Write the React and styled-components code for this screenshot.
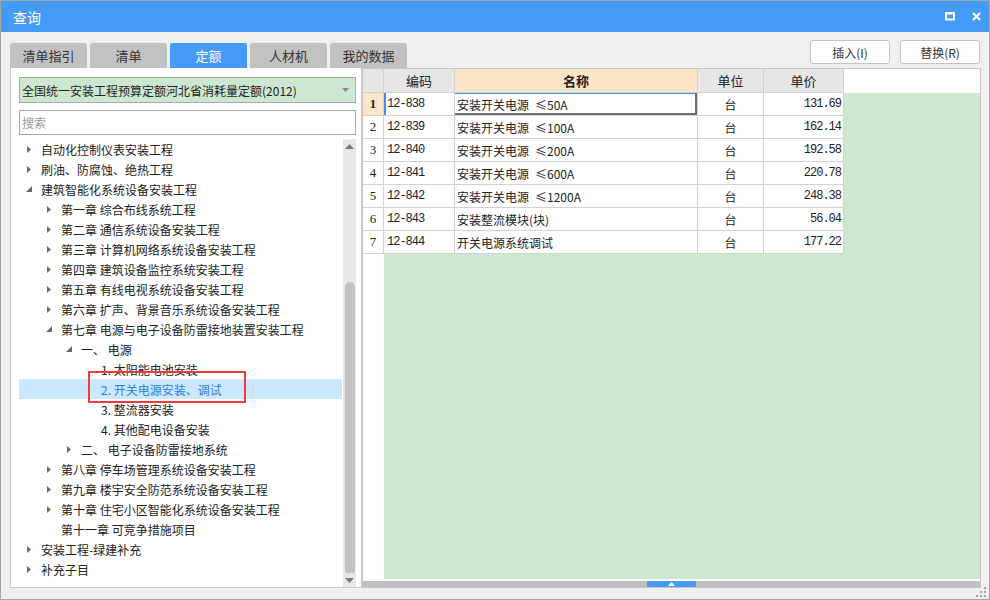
import styled, { createGlobalStyle } from "styled-components";

/**
 * Data
 */
const tabs = ["清单指引", "清单", "定额", "人材机", "我的数据"];

const tree = [
  { level: 0, arrow: "closed", text: "自动化控制仪表安装工程" },
  { level: 0, arrow: "closed", text: "刷油、防腐蚀、绝热工程" },
  { level: 0, arrow: "open", text: "建筑智能化系统设备安装工程" },
  { level: 1, arrow: "closed", text: "第一章 综合布线系统工程" },
  { level: 1, arrow: "closed", text: "第二章 通信系统设备安装工程" },
  { level: 1, arrow: "closed", text: "第三章 计算机网络系统设备安装工程" },
  { level: 1, arrow: "closed", text: "第四章 建筑设备监控系统安装工程" },
  { level: 1, arrow: "closed", text: "第五章 有线电视系统设备安装工程" },
  { level: 1, arrow: "closed", text: "第六章 扩声、背景音乐系统设备安装工程" },
  { level: 1, arrow: "open", text: "第七章 电源与电子设备防雷接地装置安装工程" },
  { level: 2, arrow: "open", text: "一、 电源" },
  { level: 3, text: "1. 太阳能电池安装" },
  { level: 3, text: "2. 开关电源安装、调试", selected: true },
  { level: 3, text: "3. 整流器安装" },
  { level: 3, text: "4. 其他配电设备安装" },
  { level: 2, arrow: "closed", text: "二、 电子设备防雷接地系统" },
  { level: 1, arrow: "closed", text: "第八章 停车场管理系统设备安装工程" },
  { level: 1, arrow: "closed", text: "第九章 楼宇安全防范系统设备安装工程" },
  { level: 1, arrow: "closed", text: "第十章 住宅小区智能化系统设备安装工程" },
  { level: 1, text: "第十一章 可竞争措施项目" },
  { level: 0, arrow: "closed", text: "安装工程-绿建补充" },
  { level: 0, arrow: "closed", text: "补充子目" },
];

const rows = [
  ["12-838", "安装开关电源\u2002≤50A", "台", "131.69"],
  ["12-839", "安装开关电源\u2002≤100A", "台", "162.14"],
  ["12-840", "安装开关电源\u2002≤200A", "台", "192.58"],
  ["12-841", "安装开关电源\u2002≤600A", "台", "220.78"],
  ["12-842", "安装开关电源\u2002≤1200A", "台", "248.38"],
  ["12-843", "安装整流模块(块)", "台", "56.04"],
  ["12-844", "开关电源系统调试", "台", "177.22"],
];

const cols = { num: 21, code: 71, name: 243, unit: 66, price: 80 };

/**
 * Styles
 */
const GlobalStyle = createGlobalStyle`
  html, body { margin: 0; padding: 0; }
  body {
    font-family: "Noto Sans CJK SC", "Noto Sans", sans-serif;
    font-size: 12px;
    color: #222;
  }
`;

const Window = styled.div`
  position: relative;
  width: 990px;
  height: 600px;
  box-sizing: border-box;
  border: 1px solid #a6a6a6;
  background: #f0f0f0;
  display: flex;
  flex-direction: column;
`;

const TitleBar = styled.div`
  height: 31px;
  flex-shrink: 0;
  background: #459bf8;
  color: #fff;
  font-size: 14px;
  display: flex;
  align-items: center;
  padding: 0 8px 0 12px;
`;

const WindowButtons = styled.div`
  margin-left: auto;
  display: flex;
  align-items: center;
  gap: 17px;
`;

const TopRow = styled.div`
  height: 36px;
  flex-shrink: 0;
  display: flex;
  padding: 0 8px 0 9px;
`;

const Tabs = styled.div`
  display: flex;
  gap: 3px;
  align-self: flex-end;
`;

const Tab = styled.div`
  width: 77px;
  height: 25px;
  display: flex;
  align-items: center;
  justify-content: center;
  font-size: 13px;
  border-radius: 2px 2px 0 0;
  background: ${({ $active }) => ($active ? "#459bf8" : "#c2c2c2")};
  color: ${({ $active }) => ($active ? "#fff" : "#333")};
`;

const Actions = styled.div`
  margin-left: auto;
  display: flex;
  gap: 10px;
  padding-top: 8px;
  padding-right: 1px;
`;

const ActionButton = styled.button`
  width: 80px;
  height: 24px;
  padding: 0;
  border: 1px solid #c4c4c4;
  border-radius: 3px;
  background: #fff;
  color: #333;
  font-family: "Noto Sans CJK SC", "Noto Sans", sans-serif;
  font-size: 12px;
`;

const Main = styled.div`
  height: 520px;
  flex-shrink: 0;
  display: flex;
  padding: 0 8px 0 9px;
`;

const LeftPanel = styled.div`
  width: 352px;
  box-sizing: border-box;
  border: 1px solid #c9c9c9;
  border-top: none;
  background: #fff;
  display: flex;
  flex-direction: column;
  padding: 9px 5px 0 8px;
`;

const Dropdown = styled.div`
  height: 26px;
  box-sizing: border-box;
  border: 1px solid #a9a9a9;
  background: #cde8d1;
  display: flex;
  align-items: center;
  padding: 0 6px 0 2px;
  font-size: 12px;
  color: #222;
  svg {
    margin-left: auto;
  }
`;

const Search = styled.input`
  margin-top: 7px;
  height: 25px;
  box-sizing: border-box;
  border: 1px solid #a9a9a9;
  padding: 0 2px;
  outline: none;
  font-family: "Noto Sans CJK SC", "Noto Sans", sans-serif;
  font-size: 12px;
  &::placeholder {
    color: #9a9a9a;
  }
`;

const TreeArea = styled.div`
  margin-top: 4px;
  flex: 1;
  min-height: 0;
  display: flex;
`;

const TreeList = styled.div`
  width: 323px;
  overflow: hidden;
`;

const TreeRow = styled.div`
  position: relative;
  height: 20px;
  line-height: 19px;
  display: flex;
  align-items: center;
  white-space: nowrap;
  padding-left: ${({ $level }) => $level * 20 + 2}px;
  background: ${({ $selected }) => ($selected ? "#cce8ff" : "transparent")};
  color: ${({ $selected }) => ($selected ? "#2f7de0" : "#222")};
`;

const ArrowBox = styled.span`
  width: 14px;
  margin: 0 5px 0 1px;
  display: flex;
  align-items: center;
  justify-content: center;
`;

const RedBox = styled.div`
  position: absolute;
  left: 69px;
  top: -8px;
  width: 158px;
  height: 32px;
  box-sizing: border-box;
  border: 2px solid #ee3b3b;
  pointer-events: none;
`;

const VScroll = styled.div`
  width: 13px;
  margin-left: 1px;
  background: #e8e8e8;
  display: flex;
  flex-direction: column;
  align-items: center;
`;

const ScrollArrow = styled.div`
  height: 14px;
  display: flex;
  align-items: center;
  justify-content: center;
`;

const ScrollTrack = styled.div`
  flex: 1;
  padding-top: 129px;
`;

const Thumb = styled.div`
  width: 10px;
  height: 291px;
  border-radius: 5px 5px 2px 2px;
  background: #c2c2c2;
`;

const TablePanel = styled.div`
  flex: 1;
  box-sizing: border-box;
  border: 1px solid #c6c6c6;
  background: #fff;
  display: flex;
  flex-direction: column;
`;

const HeaderRow = styled.div`
  height: 24px;
  flex-shrink: 0;
  display: flex;
`;

const HeadCell = styled.div`
  width: ${({ $w }) => $w}px;
  box-sizing: border-box;
  border-right: 1px solid #d2d2d2;
  border-bottom: 1px solid #d2d2d2;
  background: ${({ $hl }) => ($hl ? "#fde5c8" : "#e6e6e6")};
  font-weight: ${({ $hl }) => ($hl ? "bold" : "normal")};
  font-size: 13px;
  display: flex;
  align-items: center;
  justify-content: center;
`;

const BodyArea = styled.div`
  flex: 1;
  min-height: 0;
  display: flex;
  flex-direction: column;
  align-items: flex-start;
  background: linear-gradient(to right, #fff 21px, #cde8d1 21px);
`;

const DataRow = styled.div`
  height: 23px;
  display: flex;
  flex-shrink: 0;
`;

const Cell = styled.div`
  width: ${({ $w }) => $w}px;
  box-sizing: border-box;
  border-right: 1px solid #d2d2d2;
  border-bottom: 1px solid #d2d2d2;
  background: #fff;
  display: flex;
  align-items: center;
  justify-content: ${({ $align }) => $align || "flex-start"};
  padding: 0 2px 0 ${({ $pl }) => $pl ?? 2}px;
  font-family: ${({ $mono }) =>
    $mono ? '"Liberation Mono", "Noto Sans CJK SC", monospace' : '"Noto Sans CJK SC", "Noto Sans", sans-serif'};
  font-size: 12px;
  letter-spacing: ${({ $mono }) => ($mono ? "-1px" : "0")};
  white-space: pre;
  box-shadow: ${({ $shadow }) => $shadow || "none"};
`;

const NumCell = styled(Cell)`
  justify-content: center;
  padding: 0;
  font-family: "Liberation Serif", serif;
  font-size: 13px;
  font-weight: ${({ $active }) => ($active ? "bold" : "normal")};
  background: ${({ $active }) => ($active ? "#fde5c8" : "#fff")};
`;

const Gap = styled.div`
  height: 2px;
  flex-shrink: 0;
`;

const HScroll = styled.div`
  height: 6px;
  flex-shrink: 0;
  background: #c0c0c0;
  display: flex;
  justify-content: center;
`;

const HThumb = styled.div`
  width: 49px;
  background: #459bf8;
  display: flex;
  align-items: center;
  justify-content: center;
`;

const Grip = styled.svg`
  position: absolute;
  right: 3px;
  bottom: 2px;
`;

/**
 * Parts
 */
const Arrow = ({ kind }) => {
  if (kind === "closed")
    return (
      <svg width="4" height="7">
        <polygon points="0,0 4,3.5 0,7" fill="#6b6b6b" />
      </svg>
    );
  if (kind === "open")
    return (
      <svg width="6" height="6">
        <polygon points="6,0 6,6 0,6" fill="#6b6b6b" />
      </svg>
    );
  return null;
};

const App = () => {
  return (
    <>
      <GlobalStyle />
      <Window>
        <TitleBar>
          查询
          <WindowButtons>
            <svg width="10" height="9">
              <rect x="1" y="1.5" width="8" height="6" fill="none" stroke="#fff" strokeWidth="2" />
              <rect x="0" y="0" width="10" height="2" fill="#fff" />
            </svg>
            <svg width="9" height="9">
              <path d="M1 1 L8 8 M8 1 L1 8" stroke="#fff" strokeWidth="2" />
            </svg>
          </WindowButtons>
        </TitleBar>

        <TopRow>
          <Tabs>
            {tabs.map((t, i) => (
              <Tab key={t} $active={i === 2}>
                {t}
              </Tab>
            ))}
          </Tabs>
          <Actions>
            <ActionButton>插入(I)</ActionButton>
            <ActionButton>替换(R)</ActionButton>
          </Actions>
        </TopRow>

        <Main>
          <LeftPanel>
            <Dropdown>
              全国统一安装工程预算定额河北省消耗量定额(2012)
              <svg width="7" height="4">
                <polygon points="0,0 7,0 3.5,4" fill="#8a8a8a" />
              </svg>
            </Dropdown>
            <Search placeholder="搜索" />
            <TreeArea>
              <TreeList>
                {tree.map((n, i) => (
                  <TreeRow key={i} $level={n.level} $selected={n.selected}>
                    <ArrowBox>
                      <Arrow kind={n.arrow} />
                    </ArrowBox>
                    {n.text}
                    {n.selected && <RedBox />}
                  </TreeRow>
                ))}
              </TreeList>
              <VScroll>
                <ScrollArrow>
                  <svg width="9" height="5">
                    <polygon points="0,5 9,5 4.5,0" fill="#7a7a7a" />
                  </svg>
                </ScrollArrow>
                <ScrollTrack>
                  <Thumb />
                </ScrollTrack>
                <ScrollArrow>
                  <svg width="9" height="5">
                    <polygon points="0,0 9,0 4.5,5" fill="#7a7a7a" />
                  </svg>
                </ScrollArrow>
              </VScroll>
            </TreeArea>
          </LeftPanel>

          <TablePanel>
            <HeaderRow>
              <HeadCell $w={cols.num} />
              <HeadCell $w={cols.code}>编码</HeadCell>
              <HeadCell $w={cols.name} $hl>
                名称
              </HeadCell>
              <HeadCell $w={cols.unit}>单位</HeadCell>
              <HeadCell $w={cols.price}>单价</HeadCell>
            </HeaderRow>
            <BodyArea>
              {rows.map((r, i) => (
                <DataRow key={r[0]}>
                  <NumCell $w={cols.num} $active={i === 0}>
                    {i + 1}
                  </NumCell>
                  <Cell $w={cols.code} $mono $pl={3} $shadow={i === 0 ? "inset 2px 0 0 #3d8ef0" : undefined}>
                    {r[0]}
                  </Cell>
                  <Cell
                    $w={cols.name}
                    $shadow={i === 0 ? "inset -2px -2px 0 #6e6e6e, inset 0 1px 0 #3d8ef0" : undefined}
                  >
                    {r[1]}
                  </Cell>
                  <Cell $w={cols.unit} $align="center">
                    {r[2]}
                  </Cell>
                  <Cell $w={cols.price} $mono $align="flex-end">
                    {r[3]}
                  </Cell>
                </DataRow>
              ))}
            </BodyArea>
            <Gap />
            <HScroll>
              <HThumb>
                <svg width="7" height="4">
                  <polygon points="0,4 7,4 3.5,0" fill="#fff" />
                </svg>
              </HThumb>
            </HScroll>
          </TablePanel>
        </Main>

        <Grip width="10" height="10">
          <rect x="8" y="0" width="2" height="2" fill="#a3a3a3" />
          <rect x="4" y="4" width="2" height="2" fill="#a3a3a3" />
          <rect x="8" y="4" width="2" height="2" fill="#a3a3a3" />
          <rect x="0" y="8" width="2" height="2" fill="#a3a3a3" />
          <rect x="4" y="8" width="2" height="2" fill="#a3a3a3" />
          <rect x="8" y="8" width="2" height="2" fill="#a3a3a3" />
        </Grip>
      </Window>
    </>
  );
};

export default App;
